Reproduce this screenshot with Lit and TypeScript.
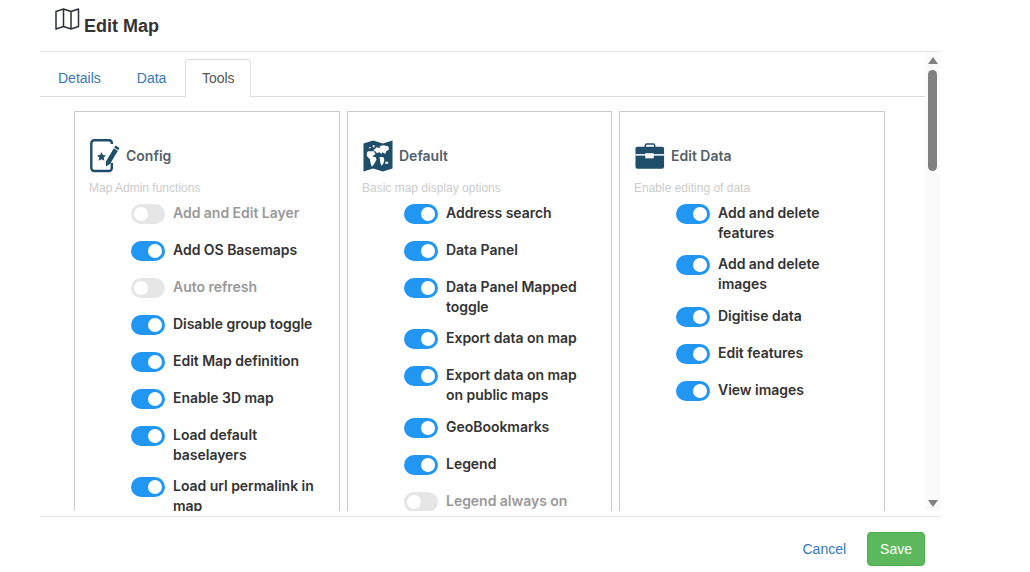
import { LitElement, html, css, svg } from "lit";
import { customElement } from "lit/decorators.js";

type Item = { label: string; on: boolean; faded?: "a" | "b" };
const cards: { title: string; desc: string; icon: string; items: Item[] }[] = [
  {
    title: "Config",
    desc: "Map Admin functions",
    icon: "config",
    items: [
      { label: "Add and Edit Layer", on: false, faded: "a" },
      { label: "Add OS Basemaps", on: true },
      { label: "Auto refresh", on: false, faded: "b" },
      { label: "Disable group toggle", on: true },
      { label: "Edit Map definition", on: true },
      { label: "Enable 3D map", on: true },
      { label: "Load default baselayers", on: true },
      { label: "Load url permalink in map", on: true },
    ],
  },
  {
    title: "Default",
    desc: "Basic map display options",
    icon: "map",
    items: [
      { label: "Address search", on: true },
      { label: "Data Panel", on: true },
      { label: "Data Panel Mapped toggle", on: true },
      { label: "Export data on map", on: true },
      { label: "Export data on map on public maps", on: true },
      { label: "GeoBookmarks", on: true },
      { label: "Legend", on: true },
      { label: "Legend always on", on: false, faded: "a" },
    ],
  },
  {
    title: "Edit Data",
    desc: "Enable editing of data",
    icon: "case",
    items: [
      { label: "Add and delete features", on: true },
      { label: "Add and delete images", on: true },
      { label: "Digitise data", on: true },
      { label: "Edit features", on: true },
      { label: "View images", on: true },
    ],
  },
];

const icons: Record<string, unknown> = {
  config: svg`<svg width="30" height="34" viewBox="0 0 30 34">
    <path d="M21.8 5 V4 A2.8 2.8 0 0 0 19 1.2 H4.3 A3 3 0 0 0 1.3 4.2 V29 A3 3 0 0 0 4.3 32 H19 A2.8 2.8 0 0 0 21.8 29 V24" fill="none" stroke="#1f4e6b" stroke-width="2.4"/>
    <path d="M11.5 13 l1.4 3 3.2.4 -2.4 2.2 .7 3.2 -2.9 -1.6 -2.9 1.6 .7 -3.2 -2.4 -2.2 3.2 -.4z" fill="#1f4e6b"/>
    <path d="M25.5 6.5 L29.5 9 L20 25 L16 27.5 L15.8 22.8z" fill="#1f4e6b"/>
    <path d="M24 9 L28 11.5" stroke="#fff" stroke-width="1"/>
  </svg>`,
  map: svg`<svg width="31" height="34" viewBox="0 0 31 34">
    <path d="M0.5 4 L10.5 1 L20.5 4 L30.5 1 V30 L20.5 33 L10.5 30 L0.5 33z" fill="#1f4e6b"/>
    <path d="M11 11 l3 -3 4 1 -1 -2 4 -1 5 1 1 3 -3 2 -1 3 -3 -2 -1 2 -2 -2 -3 1 -1 -2 -2 0z" fill="#fff"/>
    <path d="M5 12 h6 l2 3 -3 2 1 1 2 0 1 3 -3 5 -2 2 -1 -3 -1 -5 -3 -3 0 -3z" fill="#fff"/>
    <path d="M17 18 l4 0 1 3 -1 4 -2 2 -1 -3z" fill="#fff"/>
    <path d="M23 23 h3 v2 h-3z M10 6 h2 v2 h-2z M6 8 h2 v1 h-2z" fill="#fff"/>
  </svg>`,
  case: svg`<svg width="32" height="28" viewBox="0 0 32 28">
    <path d="M11 5 V2.8 A1.6 1.6 0 0 1 12.6 1.2 H19.4 A1.6 1.6 0 0 1 21 2.8 V5" fill="none" stroke="#1f4e6b" stroke-width="1.6"/>
    <rect x="0.5" y="4" width="30.5" height="23.5" rx="2" fill="#1f4e6b"/>
    <rect x="0.5" y="12" width="30.5" height="1.6" fill="#fff"/>
    <rect x="11" y="11" width="9" height="5.5" fill="#fff"/>
  </svg>`,
};

@customElement("app-root")
export class AppRoot extends LitElement {
  static styles = css`
    :host { display: block; width: 1030px; height: 572px; background: #fff; font-family: "Liberation Sans", Arial, sans-serif; color: #333; overflow: hidden; }
    .modal { width: 900px; height: 572px; margin-left: 40px; display: flex; flex-direction: column; }
    .head { height: 51px; flex: none; box-sizing: border-box; display: flex; align-items: flex-start; padding: 8px 0 0 15px; gap: 4px; }
    .head h4 { margin: 8px 0 0; font-size: 18px; line-height: 20px; font-weight: 700; color: #333; }
    .mid { flex: none; height: 466px; display: flex; align-items: flex-start; border-top: 1px solid #e5e5e5; border-bottom: 1px solid #e5e5e5; box-sizing: border-box; }
    .scroller { width: 885px; flex: none; overflow: hidden; height: 459px; }
    .tabs { display: flex; height: 38px; margin-top: 7px; box-sizing: border-box; border-bottom: 1px solid #ddd; padding-left: 2px; }
    .tab { padding: 9px 15px; height: 38px; box-sizing: border-box; font-size: 14px; line-height: 18px; color: #337ab7; margin-right: 4px; border: 1px solid transparent; border-bottom: 0; }
    .tab.mid-tab { margin-right: 3px; }
    .tab.active { color: #555; background: #fff; border-color: #ddd; border-radius: 4px 4px 0 0; padding: 9px 15.5px; }
    .cards { display: grid; grid-template-columns: 266px 265px 266px; gap: 7px; padding: 14px 0 0 34px; }
    .card { border: 1px solid #ccc; box-sizing: border-box; padding: 27px 20px 0 14px; height: 600px; }
    .title { display: flex; align-items: center; height: 34px; gap: 6px; font-size: 14px; font-weight: 600; color: #555f6a; font-family: "Inter", sans-serif; margin-left: 1px; }
    .title-text { padding-bottom: 2px; }
    .iconbox { width: 30px; display: flex; align-items: center; height: 34px; flex: none; }
    .desc { font-size: 12px; line-height: 16px; color: #ccc; margin-top: 7px; margin-bottom: 7.8px; }
    .row { display: flex; gap: 8px; margin-left: 42px; margin-bottom: 11px; min-height: 26px; }
    .lab { font-family: "Inter", sans-serif; font-size: 14px; font-weight: 600; line-height: 20px; margin-top: -1px; padding-bottom: 1.5px; color: #333; letter-spacing: -0.03px; }
    .row.a .lab, .row.b .lab { color: #999; }
    .sw { width: 34px; height: 20px; border-radius: 10px; flex: none; background: #2196f3; position: relative; }
    .sw::after { content: ""; position: absolute; width: 14px; height: 14px; border-radius: 50%; background: #fff; top: 3px; left: 17px; }
    .sw.off { background: #e6e6e6; }
    .sw.off::after { left: 3px; }
    .bar { width: 15px; flex: none; background: #fafafa; position: relative; display: flex; flex-direction: column; align-items: center; justify-content: space-between; padding: 5px 0 4px; box-sizing: border-box; height: 459px; }
    .arrow { width: 0; height: 0; border-left: 5px solid transparent; border-right: 5px solid transparent; }
    .arrow.up { border-bottom: 7px solid #808080; }
    .arrow.down { border-top: 7px solid #808080; }
    .thumb { position: absolute; top: 18px; left: 3px; width: 9px; height: 101px; background: #808080; border-radius: 5px; }
    .foot { flex: 1; display: flex; justify-content: flex-end; align-items: flex-start; padding: 15px 15px 0 0; }
    .cancel { font-size: 14px; line-height: 20px; padding: 6px 12px; color: #337ab7; border: 1px solid transparent; margin-right: 8px; }
    .save { font-size: 14px; line-height: 20px; padding: 6px 12px; background: #5cb85c; border: 1px solid #4cae4c; border-radius: 4px; color: #fff; }
  `;

  render() {
    return html`<div class="modal">
      <div class="head">
        <svg width="25" height="24" viewBox="0 0 25 24">
          <path d="M1 3.5 L8.5 1 L16 3.5 L23.5 1 V18.5 L16 21 L8.5 18.5 L1 21z M8.5 1 V18.5 M16 3.5 V21" fill="none" stroke="#2b2f3a" stroke-width="1.5" stroke-linejoin="round"/>
        </svg>
        <h4>Edit Map</h4>
      </div>
      <div class="mid">
        <div class="scroller">
          <div class="tabs">
            <div class="tab">Details</div>
            <div class="tab mid-tab">Data</div>
            <div class="tab active">Tools</div>
          </div>
          <div class="cards">
            ${cards.map(
              (c) => html`<div class="card">
                <div class="title"><span class="iconbox">${icons[c.icon]}</span><span class="title-text">${c.title}</span></div>
                <div class="desc">${c.desc}</div>
                ${c.items.map(
                  (i) => html`<div class="row ${i.faded ?? ""}">
                    <span class="sw ${i.on ? "" : "off"}"></span>
                    <span class="lab">${i.label}</span>
                  </div>`
                )}
              </div>`
            )}
          </div>
        </div>
        <div class="bar">
          <div class="arrow up"></div>
          <div class="thumb"></div>
          <div class="arrow down"></div>
        </div>
      </div>
      <div class="foot">
        <span class="cancel">Cancel</span>
        <span class="save">Save</span>
      </div>
    </div>`;
  }
}
